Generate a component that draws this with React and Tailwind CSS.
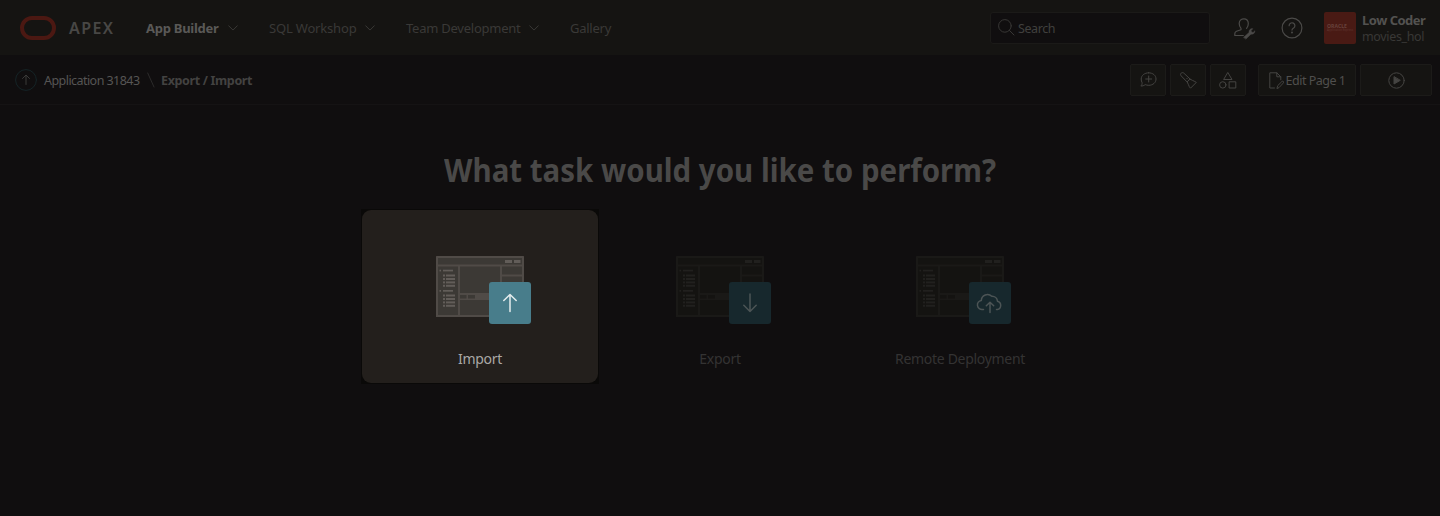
const stroke = {
  fill: "none",
  stroke: "currentColor",
  strokeLinecap: "round",
  strokeLinejoin: "round",
};

function Chevron() {
  return (
    <svg width="10" height="6" viewBox="0 0 10 6" className="shrink-0 text-[#3a3936]" {...stroke}>
      <path d="M.7.8 5 5.1 9.3.8" />
    </svg>
  );
}

function NavItem({ label, box, tone, chevron = true }) {
  return (
    <a className={`flex items-center justify-between ${box}`}>
      <span className={`whitespace-nowrap text-[13px] leading-5 ${tone}`}>{label}</span>
      {chevron && <Chevron />}
    </a>
  );
}

function Header() {
  return (
    <header className="flex h-[55px] items-center bg-[#151412] pb-px">
      <svg width="36" height="24" viewBox="0 0 36 24" className="ml-5 mt-px shrink-0" fill="none">
        <rect x="2" y="2" width="32" height="20" rx="10" stroke="#4b1812" strokeWidth="4" />
      </svg>
      <span className="ml-[13px] mt-px w-[47px] whitespace-nowrap text-[16px] font-semibold leading-6 tracking-[1.4px] text-[#484745]">
        APEX
      </span>
      <nav className="ml-[30px] mt-px flex">
        <NavItem label="App Builder" box="w-[92px]" tone="font-bold text-[#5a5957] tracking-[-0.26px]" />
        <NavItem label="SQL Workshop" box="ml-[31px] w-[106px]" tone="text-[#3a3937] tracking-[-0.18px]" />
        <NavItem label="Team Development" box="ml-[31px] w-[133px]" tone="text-[#3a3937] tracking-[-0.24px]" />
        <NavItem label="Gallery" box="ml-[31px] w-[42px]" tone="text-[#3a3937] tracking-[-0.25px]" chevron={false} />
      </nav>
      <div className="ml-auto mt-px flex h-8 w-[220px] items-center rounded-[3px] border border-[#1b1a18] bg-[#100e0f] pl-[7px] text-[#383735]">
        <svg width="17" height="17" viewBox="0 0 17 17" className="shrink-0" {...stroke}>
          <circle cx="6.9" cy="6.9" r="6.3" />
          <path d="M11.4 11.4 16 16" />
        </svg>
        <span className="ml-[3px] mt-[3px] whitespace-nowrap text-[12.5px] tracking-[-0.4px] text-[#40403e]">Search</span>
      </div>
      <svg width="22" height="22" viewBox="0 0 22 22" className="ml-6 mt-[3px] shrink-0 text-[#4b4a48]" {...stroke} strokeWidth="1.2">
        <path d="M12.600 10.400c1.200-1.200 1.700-2.800 1.700-4.800 0-3.100-1.900-4.800-4.300-4.800S5.200 2.500 5.200 5.600c0 2 .6 3.600 1.800 4.800v1.300l-4.500 1.600C1.300 13.800.8 14.600.8 15.800v1.700h8.500" />
        <path d="m9.600 19.300 5.400-4.900a3.200 3.200 0 0 1 3.900-3.700l-1.700 1.800.4 1.500 1.500.4 1.800-1.700a3.200 3.200 0 0 1-3.900 3.500L12 21Z" fill="currentColor" strokeWidth=".4" />
      </svg>
      <svg width="22" height="22" viewBox="0 0 22 22" className="ml-[25px] mt-[2px] shrink-0 text-[#4b4a48]" {...stroke} strokeWidth="1.2">
        <circle cx="11" cy="11" r="9.900" />
        <path d="M8.100 8.700a2.900 2.900 0 1 1 4.500 2.400c-1 .6-1.600 1-1.600 2" />
        <circle cx="11" cy="15.600" r=".4" fill="currentColor" />
      </svg>
      <div className="ml-[21px] mt-px flex h-8 w-8 shrink-0 flex-col items-center justify-center rounded-[2px] bg-[#491a14]">
        <svg width="28" height="9" viewBox="0 0 28 9">
          <text x="1" y="4.500" textLength="20" lengthAdjust="spacingAndGlyphs" className="fill-[#67413b] text-[5px] font-bold">ORACLE</text>
          <text x="1" y="8" textLength="26" lengthAdjust="spacingAndGlyphs" className="fill-[#603731] text-[3px]">Application Express</text>
        </svg>
      </div>
      <div className="ml-[6px] mt-[3px] flex w-[78px] flex-col whitespace-nowrap">
        <span className="text-[13px] font-bold leading-[17px] tracking-[-0.5px] text-[#535250]">Low Coder</span>
        <span className="text-[12.500px] leading-4 tracking-[-0.35px] text-[#393836]">movies_hol</span>
      </div>
    </header>
  );
}

const toolButton =
  "flex h-8 items-center justify-center rounded-[2px] border border-[#1c1b19] bg-[#151412] text-[#454442]";

function Toolbar() {
  return (
    <div className="flex h-[50px] items-center border-b border-[#151314] pr-2">
      <svg width="22" height="22" viewBox="0 0 22 22" className="ml-[15px] mt-px shrink-0 text-[#3a3a39]" {...stroke}>
        <circle cx="11" cy="11" r="10.400" stroke="#152427" />
        <path d="M11 15.500V6.500M7.500 9.500 11 6l3.500 3.500" />
      </svg>
      <span className="ml-[7px] mt-[3px] w-24 whitespace-nowrap text-[12.500px] tracking-[-0.550px] text-[#565554]">Application 31843</span>
      <svg width="8" height="16" viewBox="0 0 8 16" className="ml-[7px] mt-px shrink-0 text-[#2c2b2b]" {...stroke}>
        <path d="M.7 1 7 15" />
      </svg>
      <span className="ml-[6px] mt-[3px] whitespace-nowrap text-[12.500px] font-bold tracking-[-0.35px] text-[#434241]">Export / Import</span>
      <div className="ml-auto mt-px flex gap-1">
        <button className={`${toolButton} w-9`}>
          <svg width="17" height="16" viewBox="0 0 17 16" {...stroke}>
            <path d="M8.700.8c4.300 0 7.300 2.700 7.300 6.200s-3 6.300-7.300 6.300c-1.300 0-2.500-.3-3.500-.7C4 13.700 2.300 14.100.8 14c1-.9 1.400-2 1.300-3.300C1.500 9.700 1.200 8.400 1.200 7 1.200 3.500 4.400.8 8.700.8ZM8.700 4v6M5.700 7h6" />
          </svg>
        </button>
        <button className={`${toolButton} w-9`}>
          <svg width="17" height="17" viewBox="0 0 17 17" {...stroke}>
            <path d="m7.300 10.200-6-6.200C.3 2.900.4 1.800 1.200 1.100S3.200.4 4.100 1.400l6.300 5.900M7.300 10.200c.9 1.500 1.300 3 2 4.500l1.200 1.500 5.800-5.800-1.500-.9c-1.400-.7-2.900-1.300-4.400-2.200ZM6.800 6.300l.6.600" />
          </svg>
        </button>
        <button className={`${toolButton} w-9`}>
          <svg width="18" height="17" viewBox="0 0 18 17" {...stroke}>
            <path d="m9 .8 4 6.700H5Z" />
            <circle cx="3.800" cy="12.900" r="3.200" />
            <path d="M10.500 9.800h6.300V16h-6.300Z" />
          </svg>
        </button>
        <button className={`${toolButton} ml-2 w-[98px]`}>
          <svg width="15" height="17" viewBox="0 0 15 17" {...stroke}>
            <path d="M5.500 16H.8V.8h7l4 4v3M7.800.8v4h4M8 16.200l.7-2.500 4.200-4.200c1.200-.9 2.200.3 1.400 1.500l-4 4.300Z" />
          </svg>
          <span className="ml-[2px] mt-[2px] whitespace-nowrap text-[12.5px] tracking-[-0.500px] text-[#504f4d]">Edit Page 1</span>
        </button>
        <button className={`${toolButton} w-[72px]`}>
          <svg width="17" height="17" viewBox="0 0 17 17" {...stroke}>
            <circle cx="8.500" cy="8.500" r="7.700" />
            <path d="M6 5v7l6-3.500Z" fill="currentColor" />
          </svg>
        </button>
      </div>
    </div>
  );
}

const glyphs = {
  up: <path d="M21 29.500V12.500M14.800 18.500 21 12.500 27.200 18.500" />,
  down: <path d="M21 12V29.500M14.800 23.200 21 29.500 27.200 23.200" />,
  cloud: (
    <path d="M14.500 27.500h-.8A4.500 4.500 0 0 1 12.300 18.500 6.200 6.200 0 0 1 22.800 14.300 5.500 5.500 0 0 1 28.500 19.300 4.200 4.200 0 0 1 28.300 27.500H27.500M21 30.500V20.500M17.300 23.800 21 20.200 24.700 23.800" />
  ),
};

function Wireframe({ c }) {
  const rows = [19.5, 23, 26.4, 29.8, 39.5, 43, 46.4, 49.8];
  return (
    <svg width="88" height="61" viewBox="0 0 88 61" className="shrink-0">
      <rect width="88" height="61" rx=".5" fill={c.frame} />
      <g fill={c.pane}>
        <rect x="2" y="2" width="84" height="6.500" />
        <rect x="2" y="10.500" width="20" height="48.500" />
        <rect x="24" y="10.500" width="40" height="26.500" />
        <rect x="66" y="10.500" width="20" height="8" />
        <rect x="66" y="20.500" width="20" height="38.500" />
        <rect x="24" y="39" width="6.500" height="3.500" />
        <rect x="32" y="39" width="7" height="3.500" />
        <rect x="24" y="44" width="40" height="15" />
      </g>
      <g fill={c.mark}>
        <rect x="69" y="4" width="7" height="3" />
        <rect x="78" y="4" width="6.500" height="3" />
        {[13.7, 34].map((y) => (
          <g key={y}>
            <rect x="3.500" y={y} width="1.500" height="1.700" />
            <rect x="7" y={y} width="10" height="1.700" />
          </g>
        ))}
        {rows.map((y) => (
          <g key={y}>
            <rect x="7" y={y - 1} width="2" height="2" />
            <rect x="10" y={y - 1} width="9" height="2" />
          </g>
        ))}
      </g>
    </svg>
  );
}

const bright = { frame: "#504b47", pane: "#3c3935", mark: "#625d59" };
const dim = { frame: "#1a1917", pane: "#141311", mark: "#21201e" };

function Card({ label, glyph, active }) {
  return (
    <div className={active ? "h-[175px] w-[238px] bg-[#0a0908] p-px" : "h-[175px] w-[238px] p-px"}>
      <div className={`flex h-full flex-col items-center rounded-[9px] ${active ? "bg-[#231f1c]" : ""}`}>
        <div className="relative mt-[46px]">
          <Wireframe c={active ? bright : dim} />
          <svg
            width="42"
            height="42"
            viewBox="0 0 42 42"
            className={`absolute left-[53px] top-[26px] ${active ? "text-[#e4eced]" : "text-[#4c5455]"}`}
            {...stroke}
            strokeWidth="1.5"
          >
            <rect width="42" height="42" rx="3" fill={active ? "#487d8b" : "#17282d"} stroke="none" />
            {glyphs[glyph]}
          </svg>
        </div>
        <span className={`mt-[32px] whitespace-nowrap text-[14px] leading-5 tracking-[-0.3px] ${active ? "text-[#aaa8a6]" : "text-[#343333]"}`}>
          {label}
        </span>
      </div>
    </div>
  );
}

export default function App() {
  return (
    <div className="flex h-[516px] w-[1440px] flex-col overflow-hidden bg-[#100e0f] font-['Noto_Sans',sans-serif]">
      <Header />
      <Toolbar />
      <main className="flex flex-col items-center pt-[41px]">
        <h1 className="scale-x-[0.893] whitespace-nowrap text-[33px] font-bold leading-[48px] text-[#4a4948]">
          What task would you like to perform?
        </h1>
        <div className="mt-[15px] flex gap-[2px]">
          <Card label="Import" glyph="up" active />
          <Card label="Export" glyph="down" />
          <Card label="Remote Deployment" glyph="cloud" />
        </div>
      </main>
    </div>
  );
}
